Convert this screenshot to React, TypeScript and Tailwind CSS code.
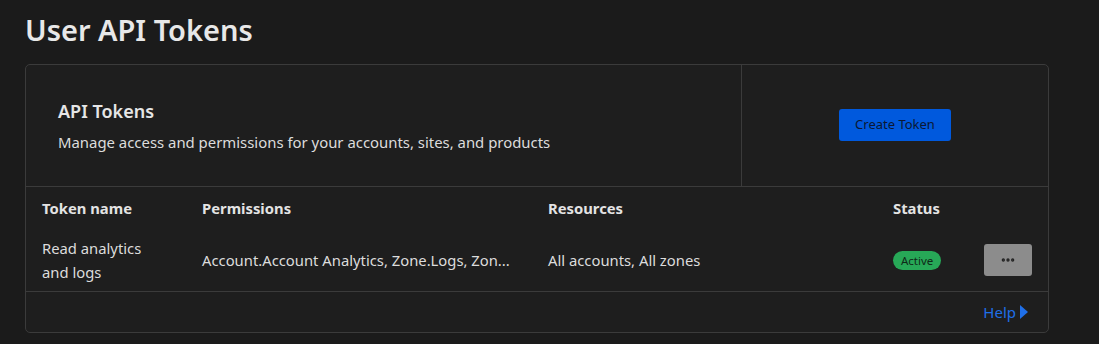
import { MoreHorizontal } from "lucide-react"

export default function App() {
  return (
    <div className="min-h-[344px] w-[1099px] bg-[#1b1b1b] px-[25px] pt-[8px] text-[#e6e6e6] font-['Noto_Sans',sans-serif]">
      {/* page title */}
      <h1 className="text-[29px] font-semibold leading-[44px] text-[#e8e8e8]">User API Tokens</h1>

      {/* card */}
      <div className="mt-[12px] w-[1024px] rounded-[5px] border border-[#3b3b3b] bg-[#1e1e1e]">
        <div className="flex h-[122px] border-b border-[#3b3b3b]">
          <div className="flex w-[716px] flex-col justify-center border-r border-[#3b3b3b] pb-[2px] pl-[32px]">
            <h2 className="text-[18px] font-semibold leading-[26px] text-[#e6e6e6]">API Tokens</h2>
            <p className="mt-[8px] text-[14.9px] leading-[20px] text-[#dcdcdc]">
              Manage access and permissions for your accounts, sites, and products
            </p>
          </div>
          <div className="flex flex-1 items-center justify-center pb-[2px]">
            <button className="h-[32px] w-[112px] rounded-[3px] bg-[#0059dd] text-[13px] text-[#0b1833]">
              Create Token
            </button>
          </div>
        </div>

        {/* table */}
        <div className="grid grid-cols-[160px_346px_345px_91px_1fr] pl-[16px] text-[14.8px]">
          <div className="flex h-[42px] items-center font-bold text-[#e3e3e3]">Token name</div>
          <div className="flex h-[42px] items-center font-bold text-[#e3e3e3]">Permissions</div>
          <div className="flex h-[42px] items-center font-bold text-[#e3e3e3]">Resources</div>
          <div className="flex h-[42px] items-center font-bold text-[#e3e3e3]">Status</div>
          <div />

          <div className="flex h-[62px] items-center leading-[24px] text-[#dcdcdc]">
            <span>Read analytics<br />and logs</span>
          </div>
          <div className="flex h-[62px] items-center whitespace-nowrap text-[#dcdcdc]">
            Account.Account Analytics, Zone.Logs, Zon...
          </div>
          <div className="flex h-[62px] items-center text-[#dcdcdc]">All accounts, All zones</div>
          <div className="flex h-[62px] items-center">
            <span className="rounded-full bg-[#27a857] px-[8px] text-[11.5px] leading-[19px] text-[#0f2a18]">Active</span>
          </div>
          <div className="flex h-[62px] items-center">
            <button className="flex h-[32px] w-[48px] items-center justify-center rounded-[3px] bg-[#8c8c8c] text-[#222]">
              <MoreHorizontal size={16} strokeWidth={3} />
            </button>
          </div>
        </div>

        <div className="flex h-[41px] items-center justify-end border-t border-[#3b3b3b] pr-[20px]">
          <a href="#" className="flex items-center gap-[4px] text-[15px] text-[#1f6fe8]">
            Help
            <svg width="8" height="14" viewBox="0 0 8 14" className="block">
              <path d="M0 0 L8 7 L0 14 Z" fill="#1f6fe8" />
            </svg>
          </a>
        </div>
      </div>
    </div>
  )
}
